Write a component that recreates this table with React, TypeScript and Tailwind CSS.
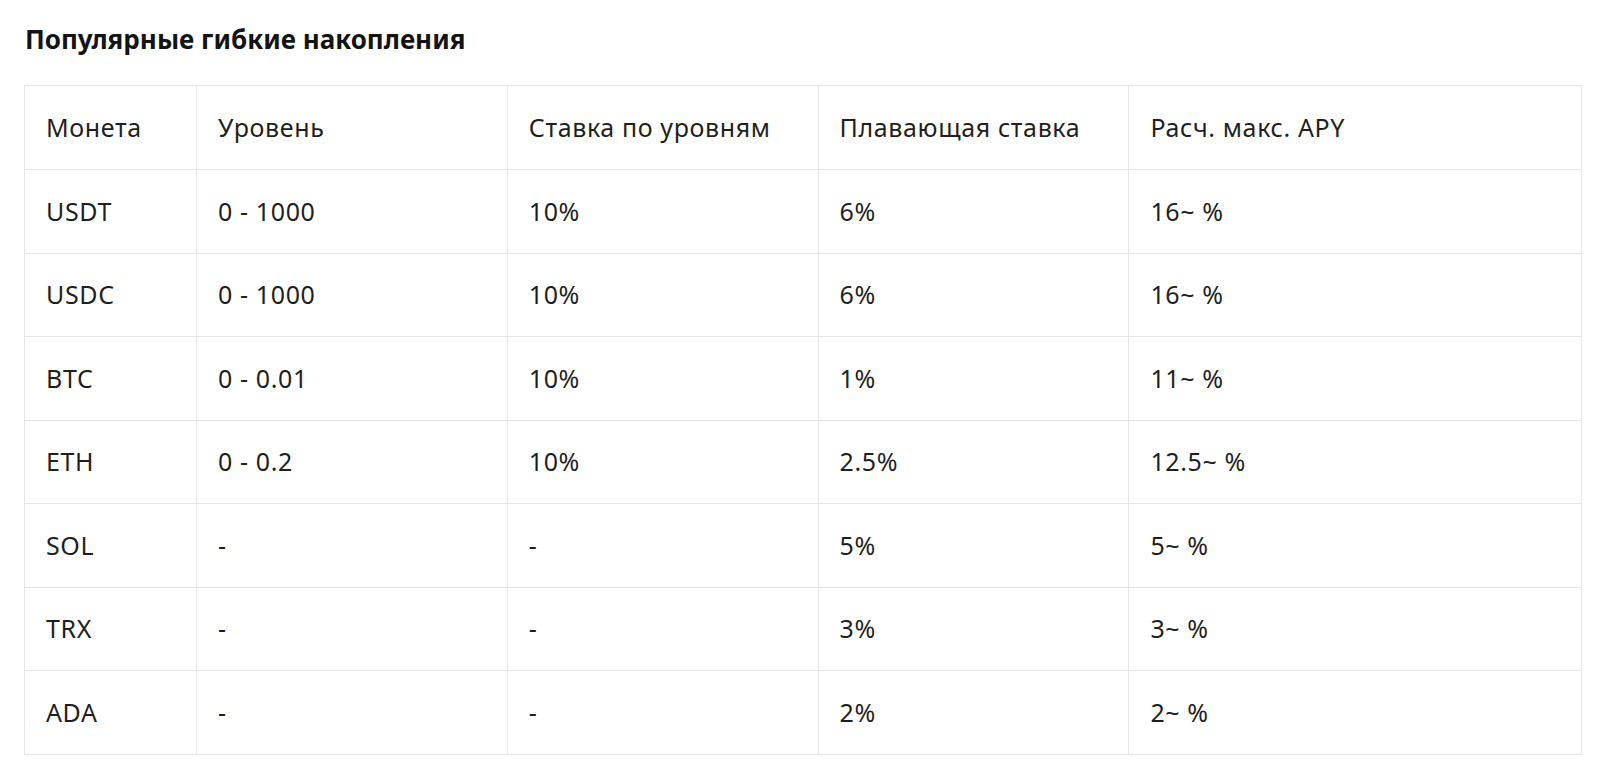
import React from 'react';

interface SavingsRow {
  coin: string;
  tier: string;
  tierRate: string;
  floatRate: string;
  maxApy: string;
}

const rows: SavingsRow[] = [
  { coin: 'USDT', tier: '0 - 1000', tierRate: '10%', floatRate: '6%', maxApy: '16~ %' },
  { coin: 'USDC', tier: '0 - 1000', tierRate: '10%', floatRate: '6%', maxApy: '16~ %' },
  { coin: 'BTC', tier: '0 - 0.01', tierRate: '10%', floatRate: '1%', maxApy: '11~ %' },
  { coin: 'ETH', tier: '0 - 0.2', tierRate: '10%', floatRate: '2.5%', maxApy: '12.5~ %' },
  { coin: 'SOL', tier: '-', tierRate: '-', floatRate: '5%', maxApy: '5~ %' },
  { coin: 'TRX', tier: '-', tierRate: '-', floatRate: '3%', maxApy: '3~ %' },
  { coin: 'ADA', tier: '-', tierRate: '-', floatRate: '2%', maxApy: '2~ %' },
];

const headers = ['Монета', 'Уровень', 'Ставка по уровням', 'Плавающая ставка', 'Расч. макс. APY'];

const cell = 'h-[83.5px] px-[21px] border border-[#e6e6e6] text-left align-middle font-normal';

const App: React.FC = () => {
  return (
    <div className="bg-white min-h-screen pl-[24px] pr-[18px] pt-[24px] text-[#1f1f1f] font-['Noto_Sans',sans-serif]">
      <h2 className="text-[26px] font-bold leading-[30px] mb-[31px] pl-[1px] text-[#141414]">
        Популярные гибкие накопления
      </h2>

      <table className="w-[1558px] border-collapse text-[25px] tracking-[0.025em]">
        <colgroup>
          <col className="w-[172px]" />
          <col className="w-[311px]" />
          <col className="w-[311px]" />
          <col className="w-[311px]" />
          <col className="w-[453px]" />
        </colgroup>
        <thead>
          <tr>
            {headers.map((h) => (
              <th key={h} className={`${cell} h-[84px]`}>
                {h}
              </th>
            ))}
          </tr>
        </thead>
        <tbody>
          {rows.map((row) => (
            <tr key={row.coin}>
              <td className={cell}>{row.coin}</td>
              <td className={cell}>{row.tier}</td>
              <td className={cell}>{row.tierRate}</td>
              <td className={cell}>{row.floatRate}</td>
              <td className={cell}>{row.maxApy}</td>
            </tr>
          ))}
        </tbody>
      </table>
    </div>
  );
};

export default App;
